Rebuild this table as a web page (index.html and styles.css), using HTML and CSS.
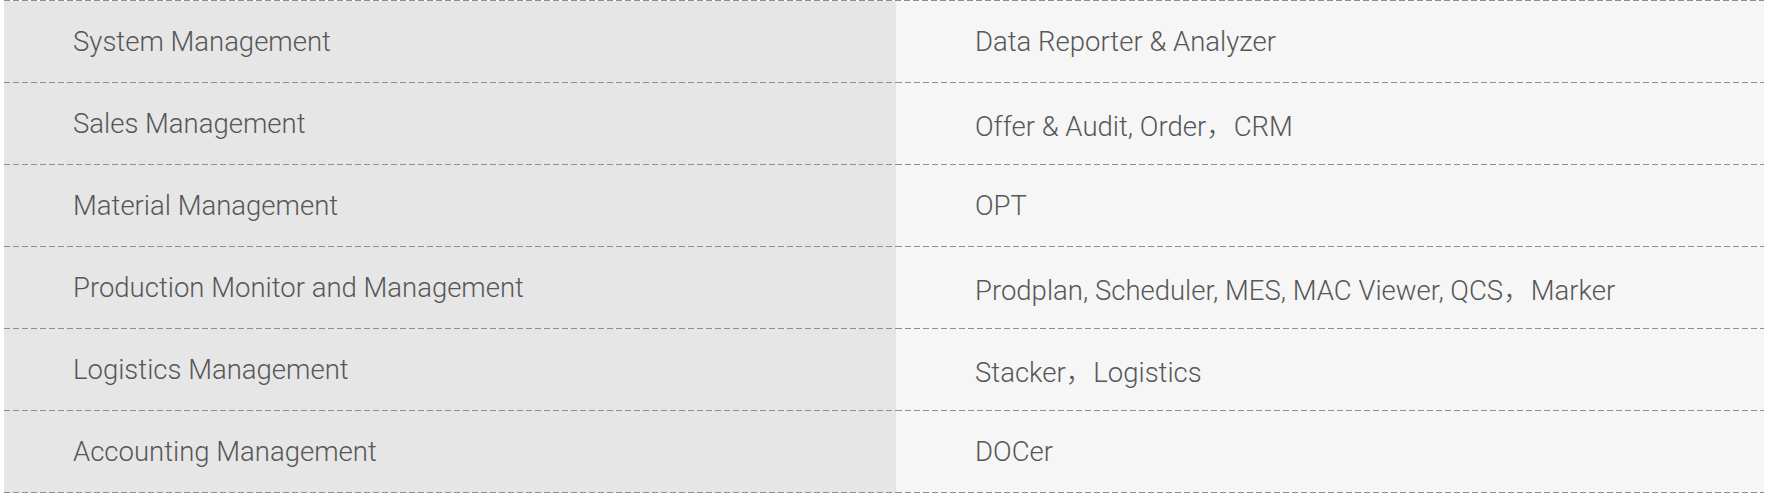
FILE: index.html
```html
<!DOCTYPE html>
<html lang="en">
<head>
<meta charset="utf-8">
<title>Modules</title>
<link rel="stylesheet" href="styles.css">
</head>
<body>
<div class="table">
  <div class="row"><div class="cell name">System Management</div><div class="cell mods">Data Reporter &amp; Analyzer</div></div>
  <div class="row"><div class="cell name">Sales Management</div><div class="cell mods">Offer &amp; Audit, Order，CRM</div></div>
  <div class="row"><div class="cell name">Material Management</div><div class="cell mods">OPT</div></div>
  <div class="row"><div class="cell name">Production Monitor and Management</div><div class="cell mods">Prodplan, Scheduler, MES, MAC Viewer, QCS，Marker</div></div>
  <div class="row"><div class="cell name">Logistics Management</div><div class="cell mods">Stacker，Logistics</div></div>
  <div class="row"><div class="cell name">Accounting Management</div><div class="cell mods">DOCer</div></div>
</div>
</body>
</html>
```
FILE: styles.css
```css
html, body {
  margin: 0;
  padding: 0;
  background: #ffffff;
}
.table {
  margin-left: 4px;
  width: 1760px;
  padding-top: 1px;
  background-image: repeating-linear-gradient(to right, #8f8f8f 0 6px, transparent 6px 9px);
  background-size: 100% 1px;
  background-position: left top;
  background-repeat: no-repeat;
  font-family: "Roboto", "Noto Sans CJK SC", sans-serif;
  font-weight: 300;
  font-size: 27.5px;
  color: #575757;
}
.row {
  display: grid;
  grid-template-columns: 892px 1fr;
  height: 82px;
}
.cell {
  display: flex;
  align-items: center;
  padding-bottom: 1px;
  box-sizing: border-box;
  background-image: repeating-linear-gradient(to right, #8f8f8f 0 6px, transparent 6px 9px);
  background-size: 100% 1px;
  background-position: left bottom;
  background-repeat: no-repeat;
}
.name {
  background-color: #e6e6e6;
  padding-left: 69px;
}
.mods {
  background-color: #f5f6f5;
  padding-left: 79px;
}
```
